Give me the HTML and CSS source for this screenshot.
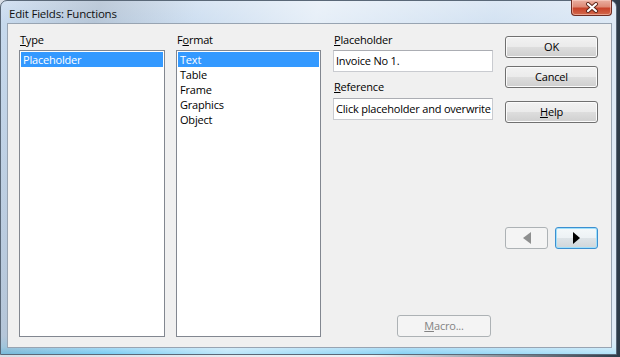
FILE: index.html
```html
<!DOCTYPE html>
<html>
<head>
<meta charset="utf-8">
<title>Edit Fields: Functions</title>
<link rel="stylesheet" href="styles.css">
</head>
<body>
<div class="window">
  <div class="titlebar">
    <span class="title">Edit Fields: Functions</span>
    <div class="close">
      <svg width="14" height="11" viewBox="0 0 14 11">
        <path d="M3 2 L11 9 M11 2 L3 9" stroke="#5b2418" stroke-width="4" stroke-linecap="round"/>
        <path d="M3 2 L11 9 M11 2 L3 9" stroke="#ffffff" stroke-width="2.2" stroke-linecap="round"/>
      </svg>
    </div>
  </div>
  <div class="client">
    <div class="col col-type">
      <div class="label"><u>T</u>ype</div>
      <div class="listbox">
        <div class="item sel">Placeholder</div>
      </div>
    </div>
    <div class="col col-format">
      <div class="label">F<u>o</u>rmat</div>
      <div class="listbox">
        <div class="item sel">Text</div>
        <div class="item">Table</div>
        <div class="item">Frame</div>
        <div class="item">Graphics</div>
        <div class="item">Object</div>
      </div>
    </div>
    <div class="col col-fields">
      <div class="label"><u>P</u>laceholder</div>
      <div class="input">Invoice No 1.</div>
      <div class="label label-ref"><u>R</u>eference</div>
      <div class="input">Click placeholder and overwrite</div>
      <div class="btn btn-disabled btn-macro"><u>M</u>acro...</div>
    </div>
    <div class="col col-buttons">
      <div class="btn">OK</div>
      <div class="btn btn-cancel">Cancel</div>
      <div class="btn btn-help"><u>H</u>elp</div>
      <div class="arrows">
        <div class="btn btn-disabled btn-arrow">
          <svg width="8" height="12" viewBox="0 0 8 12"><polygon points="8,0 8,12 0,6" fill="#8e8f8f"/></svg>
        </div>
        <div class="btn btn-focus btn-arrow">
          <svg width="8" height="12" viewBox="0 0 8 12"><polygon points="0,0 0,12 7,6" fill="#000"/></svg>
        </div>
      </div>
    </div>
  </div>
</div>
</body>
</html>
```

FILE: styles.css
```css
html, body {
  margin: 0;
  padding: 0;
}

body {
  width: 620px;
  height: 357px;
  overflow: hidden;
  background: linear-gradient(90deg, #d8dee6 0%, #eef2f6 60%, #2c3a48 100%);
  font-family: "Open Sans", "Noto Sans", sans-serif;
  font-size: 11px;
  letter-spacing: -0.2px;
  color: #000;
}

.window {
  width: 617px;
  height: 355px;
  box-sizing: border-box;
  border: 1px solid #5a6878;
  border-radius: 7px 7px 0 0;
  padding: 0 4px 6px 6px;
  display: flex;
  flex-direction: column;
  background:
    linear-gradient(105deg, rgba(255,255,255,0) 0%, rgba(150,160,172,0.35) 14%, rgba(255,255,255,0.1) 28%, rgba(255,255,255,0.55) 45%, rgba(255,255,255,0.2) 70%, rgba(255,255,255,0.5) 100%),
    linear-gradient(180deg, #d4e2f2 0px, #c8dbef 22px, #c4d8ee 335px, #a6d8f4 346px, #5fc5f2 354px);
}

.titlebar {
  height: 22px;
  display: flex;
  align-items: flex-start;
  justify-content: space-between;
}

.title {
  margin: 5px 0 0 2px;
  line-height: 15px;
  font-size: 11.5px;
  color: #111;
}

.close {
  width: 41px;
  height: 16px;
  margin: -1px 0 0 0;
  box-sizing: border-box;
  border: 1px solid #6e2c22;
  border-top: none;
  border-radius: 0 0 4px 4px;
  background: linear-gradient(180deg, #eab0a2 0%, #de8a76 45%, #c8432a 55%, #d2694c 100%);
  box-shadow: inset 0 0 0 1px rgba(255,220,210,0.5);
  display: flex;
  align-items: center;
  justify-content: center;
}

.client {
  flex: 1;
  display: flex;
  border: 1px solid #98a4b2;
  background: #f0f0f0;
  padding: 8px 12px 10px 11px;
}

.col {
  display: flex;
  flex-direction: column;
}

.col-type {
  width: 146px;
}

.col-format {
  width: 145px;
  margin-left: 11px;
}

.col-fields {
  width: 160px;
  margin-left: 12px;
}

.col-buttons {
  width: 93px;
  margin-left: 12px;
  padding-top: 4px;
}

.label {
  height: 15px;
  line-height: 15px;
  padding-left: 1px;
  margin-bottom: 3px;
  white-space: nowrap;
}

.label u,
.btn u {
  text-decoration: underline;
  text-underline-offset: 1px;
}

.listbox {
  flex: 1;
  border: 1px solid #828790;
  background: #fff;
  padding: 1px;
}

.item {
  height: 15px;
  line-height: 15px;
  padding-left: 2px;
  white-space: nowrap;
}

.item.sel {
  background: #3399ff;
  color: #fff;
}

.input {
  height: 22px;
  box-sizing: border-box;
  border: 1px solid #c9cbd0;
  border-top-color: #abadb3;
  background: #fff;
  padding-left: 2px;
  line-height: 20px;
  white-space: nowrap;
  overflow: hidden;
}

.label-ref {
  margin-top: 7px;
  margin-bottom: 4px;
}

.btn {
  height: 22px;
  box-sizing: border-box;
  border: 1px solid #707070;
  border-radius: 3px;
  background: linear-gradient(180deg, #f2f2f2 0%, #ebebeb 48%, #dddddd 52%, #cfcfcf 100%);
  box-shadow: inset 0 0 0 1px #fbfbfb;
  display: flex;
  align-items: center;
  justify-content: center;
  line-height: 20px;
}

.btn-cancel {
  margin-top: 8px;
}

.btn-help {
  margin-top: 13px;
}

.btn-disabled {
  border-color: #adb2b5;
  background: #f4f4f4;
  box-shadow: none;
  color: #838383;
}

.btn-macro {
  margin-top: auto;
  width: 94px;
  align-self: flex-end;
  margin-right: 2px;
}

.arrows {
  display: flex;
  gap: 7px;
  margin-top: 104px;
}

.btn-arrow {
  width: 43px;
}

.btn-focus {
  border-color: #3c8fd0;
  box-shadow: inset 0 0 0 1px #9fe0fb;
  background: linear-gradient(180deg, #f4f8fa 0%, #edf2f5 48%, #dde3e7 52%, #d0d6da 100%);
}
```
